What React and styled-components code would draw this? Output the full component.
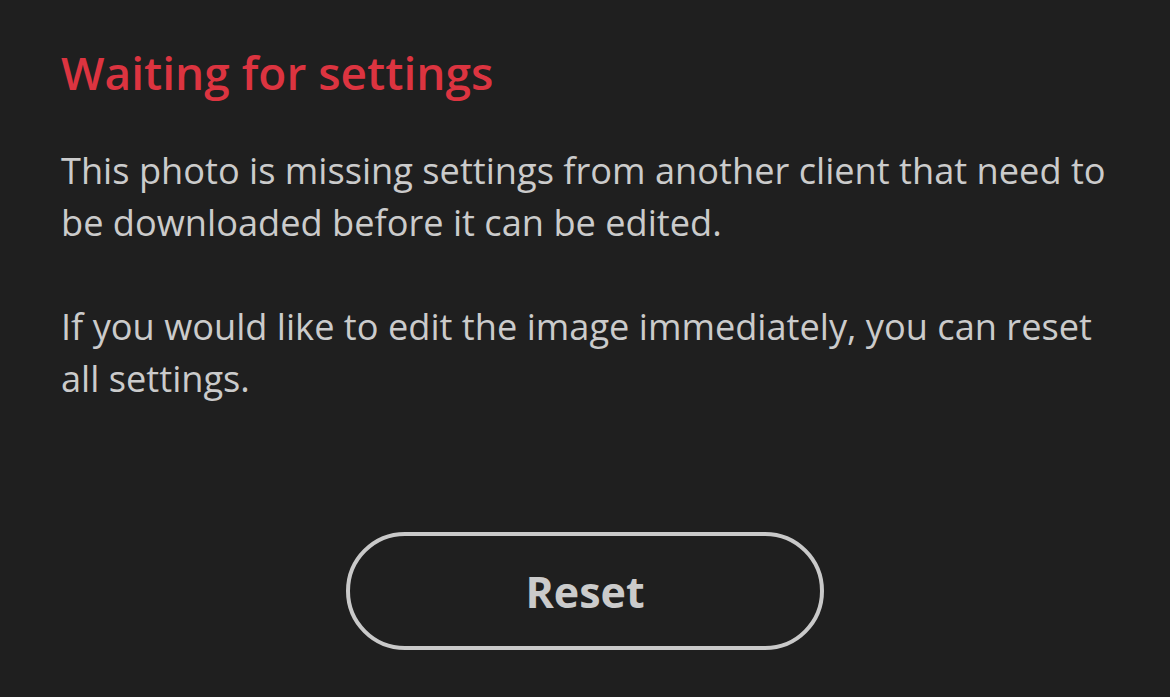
import React from "react";
import styled, { createGlobalStyle } from "styled-components";

const Global = createGlobalStyle`
  html, body {
    margin: 0;
    padding: 0;
    background: #1f1f1f;
  }
  body {
    font-family: "Open Sans", "Noto Sans", sans-serif;
  }
`;

const Panel = styled.div`
  width: 1170px;
  height: 697px;
  box-sizing: border-box;
  background: #1f1f1f;
  padding: 41px 61px 0 61px;
  display: flex;
  flex-direction: column;
  overflow: hidden;
`;

const Title = styled.h1`
  margin: 0;
  color: #dc3440;
  font-size: 46px;
  font-weight: 600;
  line-height: 62px;
`;

const Body = styled.p`
  margin: ${(p) => p.$top || 0}px 0 0 0;
  color: #cbcbcb;
  font-size: 36.2px;
  line-height: 52px;
  font-weight: 400;
`;

const Actions = styled.div`
  display: flex;
  justify-content: center;
  margin-top: 128px;
`;

const ResetButton = styled.button`
  width: 478px;
  height: 118px;
  box-sizing: border-box;
  border: 4px solid #c9c9c9;
  border-radius: 59px;
  background: transparent;
  color: #cbcbcb;
  font-family: "Open Sans", "Noto Sans", sans-serif;
  font-size: 43px;
  font-weight: 700;
  cursor: pointer;
`;

export default function App() {
  return (
    <>
      <Global />
      <Panel>
        <Title>Waiting for settings</Title>
        <Body $top={41}>
          This photo is missing settings from another client that need to be
          downloaded before it can be edited.
        </Body>
        <Body $top={52}>
          If you would like to edit the image immediately, you can reset all
          settings.
        </Body>
        <Actions>
          <ResetButton>Reset</ResetButton>
        </Actions>
      </Panel>
    </>
  );
}
